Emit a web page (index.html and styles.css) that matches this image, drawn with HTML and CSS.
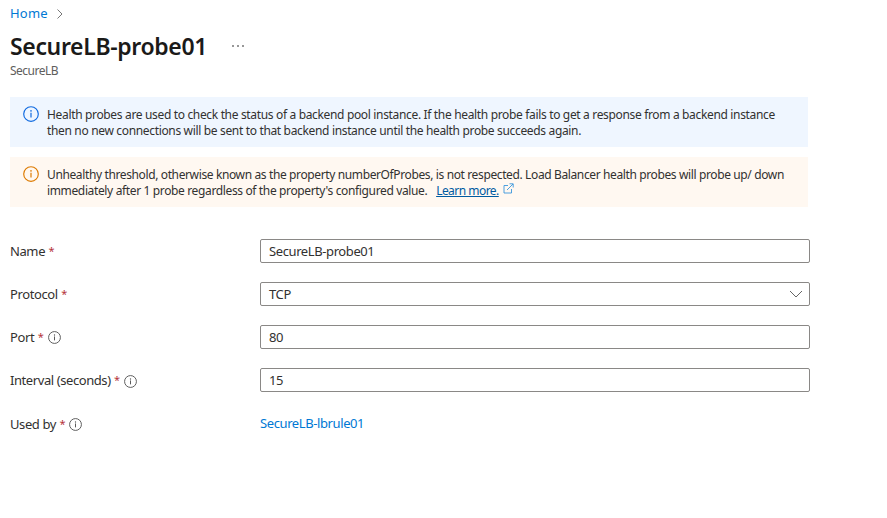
FILE: index.html
```html
<!DOCTYPE html>
<html lang="en">
<head>
<meta charset="utf-8">
<title>SecureLB-probe01</title>
<link rel="stylesheet" href="styles.css">
</head>
<body>
<svg class="defs" width="0" height="0" aria-hidden="true">
  <symbol id="info" viewBox="0 0 16 16">
    <circle cx="8" cy="8" r="7.3" fill="none" stroke="currentColor" stroke-width="1.15"/>
    <path d="M8 6.7v4.8" fill="none" stroke="currentColor" stroke-width="1.2"/>
    <circle cx="8" cy="4.9" r=".8" fill="currentColor"/>
  </symbol>
</svg>
<nav class="breadcrumb">
  <a href="#">Home</a>
  <svg width="8" height="12" viewBox="0 0 8 12"><path d="M1.5 1.5 6 6 1.5 10.5" fill="none" stroke="#777"/></svg>
</nav>
<header class="heading">
  <div class="title-row">
    <h1>SecureLB-probe01</h1>
    <svg class="more" width="12" height="2" viewBox="0 0 12 2"><path d="M0 1h2M5 1h2M10 1h2" stroke="#777" stroke-width="1.3"/></svg>
  </div>
  <p class="subtitle">SecureLB</p>
</header>
<section class="banner banner-info">
  <svg class="banner-icon"><use href="#info"/></svg>
  <p><span class="line">Health probes are used to check the status of a backend pool instance. If the health probe fails to get a response from a backend instance</span>
  <span class="line">then no new connections will be sent to that backend instance until the health probe succeeds again.</span></p>
</section>
<section class="banner banner-warning">
  <svg class="banner-icon"><use href="#info"/></svg>
  <p><span class="line">Unhealthy threshold, otherwise known as the property numberOfProbes, is not respected. Load Balancer health probes will probe up/ down</span>
  <span class="line">immediately after 1 probe regardless of the property's configured value. <a href="#">Learn more.</a><svg class="external" width="11" height="11" viewBox="0 0 11 11"><path d="M5 2.5H1v7.5h7.5V6M4 7l6-6M6.5.8h3.7v3.7" fill="none" stroke="#3a96dd" stroke-width=".9"/></svg></span></p>
</section>
<form class="form">
  <div class="row"><label>Name <b>*</b></label><div class="field"><span>SecureLB-probe01</span></div></div>
  <div class="row"><label>Protocol <b>*</b></label><div class="field"><span>TCP</span><svg width="14" height="8" viewBox="0 0 14 8"><path d="M1 1l6 6 6-6" fill="none" stroke="#666"/></svg></div></div>
  <div class="row"><label>Port <b>*</b><svg class="tip"><use href="#info"/></svg></label><div class="field"><span>80</span></div></div>
  <div class="row"><label class="interval">Interval (seconds) <b>*</b><svg class="tip"><use href="#info"/></svg></label><div class="field"><span>15</span></div></div>
  <div class="row"><label class="used-by">Used by <b>*</b><svg class="tip"><use href="#info"/></svg></label><a href="#">SecureLB-lbrule01</a></div>
</form>
</body>
</html>
```
FILE: styles.css
```css
* { box-sizing: border-box; }
body {
  margin: 0;
  padding: 3px 77px 0 10px;
  background: #fff;
  color: #323130;
  font: 12px/16px "Noto Sans", "Open Sans", sans-serif;
}
h1, p { margin: 0; }
a { color: #0078d4; text-decoration: none; }
.defs { position: absolute; }
.breadcrumb {
  display: flex;
  align-items: center;
  gap: 8px;
  height: 20px;
  font-size: 13px;
  letter-spacing: .2px;
}
.breadcrumb svg { margin-top: 2px; }
.heading { height: 74px; }
.title-row { display: flex; align-items: center; height: 40px; padding-top: 6px; }
h1 {
  width: 222px;
  color: #1b1a19;
  font-size: 23px;
  font-weight: 600;
  line-height: 32px;
  letter-spacing: -.35px;
  white-space: nowrap;
}
.subtitle { color: #605e5c; letter-spacing: -.5px; }
.more { margin-top: 0; }
.banner {
  display: flex;
  width: 798px;
  height: 50px;
  padding: 10px 13px 0;
  margin-bottom: 10px;
}
.banner-info { background: #eff6ff; }
.banner-warning { background: #fff8f1; }
.banner-icon { width: 16px; height: 16px; margin: -1px 8px 0 0; flex: none; }
.banner-info .banner-icon { color: #0f6ae0; }
.banner-warning .banner-icon { color: #dd7a00; }
.line { display: block; white-space: nowrap; letter-spacing: -.338px; }
.banner-warning .line { letter-spacing: -.376px; }
.banner-warning .line + .line { letter-spacing: -.36px; }
.line a { color: #005ba1; text-decoration: underline; margin-left: 6px; letter-spacing: -.53px; }
.external { margin-left: 4px; vertical-align: 1px; }
.form {
  display: grid;
  gap: 19px;
  padding-top: 22px;
  font-size: 13px;
}
.row {
  display: grid;
  grid-template-columns: 250px 550px;
  align-items: center;
  height: 24px;
  letter-spacing: -.4px;
}
label { display: flex; align-items: center; white-space: pre; }
label b { width: 6px; margin-left: .5px; color: #b5343a; font-size: 11px; font-weight: 400; }
.tip { width: 13px; height: 13px; margin: 1px 0 0 4px; color: #555; }
.interval .tip { margin-top: 3px; }
.interval { letter-spacing: -.42px; }
.used-by { padding-top: 2px; }
.field {
  display: flex;
  align-items: center;
  justify-content: space-between;
  height: 24px;
  padding: 0 6px 0 8px;
  border: 1px solid #8a8886;
  border-radius: 2px;
}
```
